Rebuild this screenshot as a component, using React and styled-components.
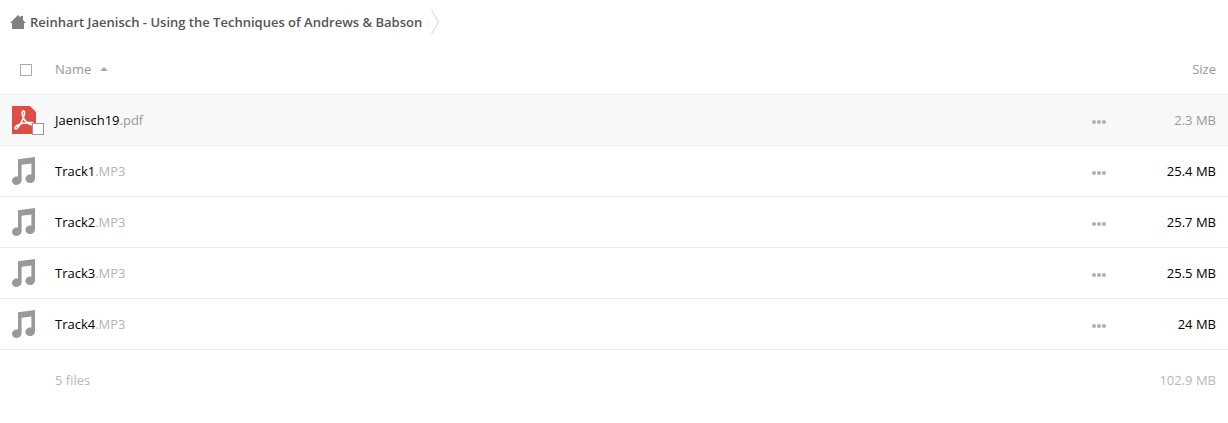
import React from "react";
import styled, { createGlobalStyle } from "styled-components";

const GlobalStyle = createGlobalStyle`
  body {
    margin: 0;
    background: #fff;
    font-family: "Open Sans", "Noto Sans", sans-serif;
    font-size: 13px;
    line-height: 18px;
    color: #000;
  }
  *, *::before, *::after { box-sizing: border-box; }
`;

const Breadcrumbs = styled.nav`
  display: flex;
  align-items: center;
  height: 44px;
  padding-left: 10px;
`;

const Crumb = styled.a`
  display: flex;
  align-items: center;
  gap: 4px;
  margin-right: 8px;
  color: #555;
  font-weight: 600;
  text-decoration: none;
  white-space: nowrap;
`;

const FileTable = styled.table`
  width: 100%;
  border-collapse: separate;
  border-spacing: 0;
  table-layout: fixed;
`;

const HeadCell = styled.th`
  width: ${(p) => p.$width || "auto"};
  height: 51px;
  padding: ${(p) => p.$padding || "0"};
  border-bottom: 1px solid #ececec;
  color: #999;
  font-weight: 400;
  text-align: ${(p) => p.$align || "left"};
`;

const SortButton = styled.button`
  display: flex;
  align-items: center;
  gap: 9px;
  padding: 0;
  border: 0;
  background: none;
  color: inherit;
  font: inherit;
  cursor: pointer;
`;

const Checkbox = styled.input`
  appearance: none;
  display: block;
  width: 12px;
  height: 12px;
  margin: 0;
  border: 1px solid ${(p) => (p.$dark ? "#999" : "#aaa")};
  background: #fff;
`;

const Row = styled.tr`
  background: ${(p) => (p.$active ? "#f8f8f8" : "#fff")};
`;

const Cell = styled.td`
  height: 51px;
  padding: ${(p) => p.$padding || "0"};
  border-bottom: 1px solid #ececec;
`;

const IconBox = styled.div`
  position: relative;
  width: 24px;
  height: 28px;

  svg { display: block; }
`;

const Badge = styled.div`
  position: absolute;
  left: 20px;
  top: 17px;
`;

const FileLink = styled.a`
  color: #000;
  text-decoration: none;
`;

const Extension = styled.span`
  color: ${(p) => (p.$active ? "#999" : "#b4b4b4")};
`;

const MoreButton = styled.button`
  display: flex;
  align-items: center;
  height: 20px;
  margin: 4px 0 0;
  padding: 0;
  border: 0;
  background: none;
  cursor: pointer;
`;

const SizeCell = styled(Cell)`
  padding-right: 12px;
  color: ${(p) => (p.$muted ? "#999" : "#000")};
  text-align: right;
`;

const FootCell = styled.td`
  height: 60px;
  padding: ${(p) => (p.$align ? "0 12px 0 0" : "0")};
  color: #b8b8b8;
  text-align: ${(p) => p.$align || "left"};
`;

const HomeIcon = () => (
  <svg width="16" height="14" viewBox="0 0 16 14" aria-hidden="true">
    <path fill="#808080" d="M8 0L10.5 2.5V1H13V5L16 8H14V14H2V8H0Z" />
  </svg>
);

const CrumbArrow = () => (
  <svg width="10" height="26" viewBox="0 0 10 26" aria-hidden="true">
    <path d="M1.5 1L8.5 13L1.5 25" fill="none" stroke="#d4d4d4" />
  </svg>
);

const SortArrow = () => (
  <svg width="8" height="4" viewBox="0 0 8 4" aria-hidden="true">
    <path d="M4 0L8 4H0Z" fill="#aaa" />
  </svg>
);

const PdfIcon = () => (
  <svg width="24" height="28" viewBox="0 0 24 28" aria-hidden="true">
    <path fill="#dc4e46" d="M0 0H18L24 6V28H0Z" />
    <path
      fill="none"
      stroke="#fff"
      strokeWidth="1.6"
      strokeLinejoin="round"
      d="M11.3 4.8C9.7 4.8 10 8 10.9 10.6C12.2 14.2 15.6 18 19.4 18.7C22 19.1 22.2 16.9 19.4 16.6C14.5 16.2 8.6 17.4 4.6 19.7C2 21.4 3 24 5 22.3C7.8 19.6 11 13.4 12.2 9C12.8 6.2 12.6 4.8 11.3 4.8Z"
    />
  </svg>
);

const MusicIcon = () => (
  <svg width="24" height="28" viewBox="0 0 24 28" aria-hidden="true">
    <path
      fill="#999"
      d="M6 2.3L23 0V21.2C23 24 20.8 26 18.2 26C15.4 26 13.4 24.3 13.4 21.8C13.4 19.3 15.8 17.4 18.2 17.4C18.7 17.4 19.1 17.5 19.4 17.6V6.4L9.6 7.8V23.1C9.6 26 7.2 28 4.6 28C1.9 28 0 26.3 0 24C0 21.4 2.2 19.4 4.8 19.4C5.3 19.4 5.7 19.5 6 19.6Z"
    />
  </svg>
);

const DotsIcon = () => (
  <svg width="14" height="4" viewBox="0 0 14 4" fill="#b0b0b0" aria-hidden="true">
    <circle cx="2" cy="2" r="2" />
    <circle cx="7" cy="2" r="2" />
    <circle cx="12" cy="2" r="2" />
  </svg>
);

const files = [
  { name: "Jaenisch19", ext: ".pdf", size: "2.3 MB", active: true },
  { name: "Track1", ext: ".MP3", size: "25.4 MB" },
  { name: "Track2", ext: ".MP3", size: "25.7 MB" },
  { name: "Track3", ext: ".MP3", size: "25.5 MB" },
  { name: "Track4", ext: ".MP3", size: "24 MB" },
];

const FileRow = ({ file }) => (
  <Row $active={file.active}>
    <Cell $padding="0 0 0 12px">
      <IconBox>
        {file.active ? <PdfIcon /> : <MusicIcon />}
        {file.active && (
          <Badge>
            <Checkbox type="checkbox" $dark aria-label={`Select ${file.name}`} />
          </Badge>
        )}
      </IconBox>
    </Cell>
    <Cell>
      <FileLink href="#">
        {file.name}
        <Extension $active={file.active}>{file.ext}</Extension>
      </FileLink>
    </Cell>
    <Cell>
      <MoreButton type="button" aria-label={`Actions for ${file.name}`}>
        <DotsIcon />
      </MoreButton>
    </Cell>
    <SizeCell $muted={file.active}>{file.size}</SizeCell>
  </Row>
);

export default function App() {
  return (
    <main>
      <GlobalStyle />
      <Breadcrumbs aria-label="Breadcrumb">
        <Crumb href="#">
          <HomeIcon />
          Reinhart Jaenisch - Using the Techniques of Andrews &amp; Babson
        </Crumb>
        <CrumbArrow />
      </Breadcrumbs>
      <FileTable>
        <thead>
          <tr>
            <HeadCell $width="55px" $padding="2px 0 0 20px">
              <Checkbox type="checkbox" aria-label="Select all files" />
            </HeadCell>
            <HeadCell>
              <SortButton type="button">
                Name
                <SortArrow />
              </SortButton>
            </HeadCell>
            <HeadCell $width="36px" />
            <HeadCell $width="100px" $padding="0 12px 0 0" $align="right">
              Size
            </HeadCell>
          </tr>
        </thead>
        <tbody>
          {files.map((file) => (
            <FileRow key={file.name} file={file} />
          ))}
        </tbody>
        <tfoot>
          <tr>
            <FootCell />
            <FootCell>5 files</FootCell>
            <FootCell />
            <FootCell $align="right">102.9 MB</FootCell>
          </tr>
        </tfoot>
      </FileTable>
    </main>
  );
}
